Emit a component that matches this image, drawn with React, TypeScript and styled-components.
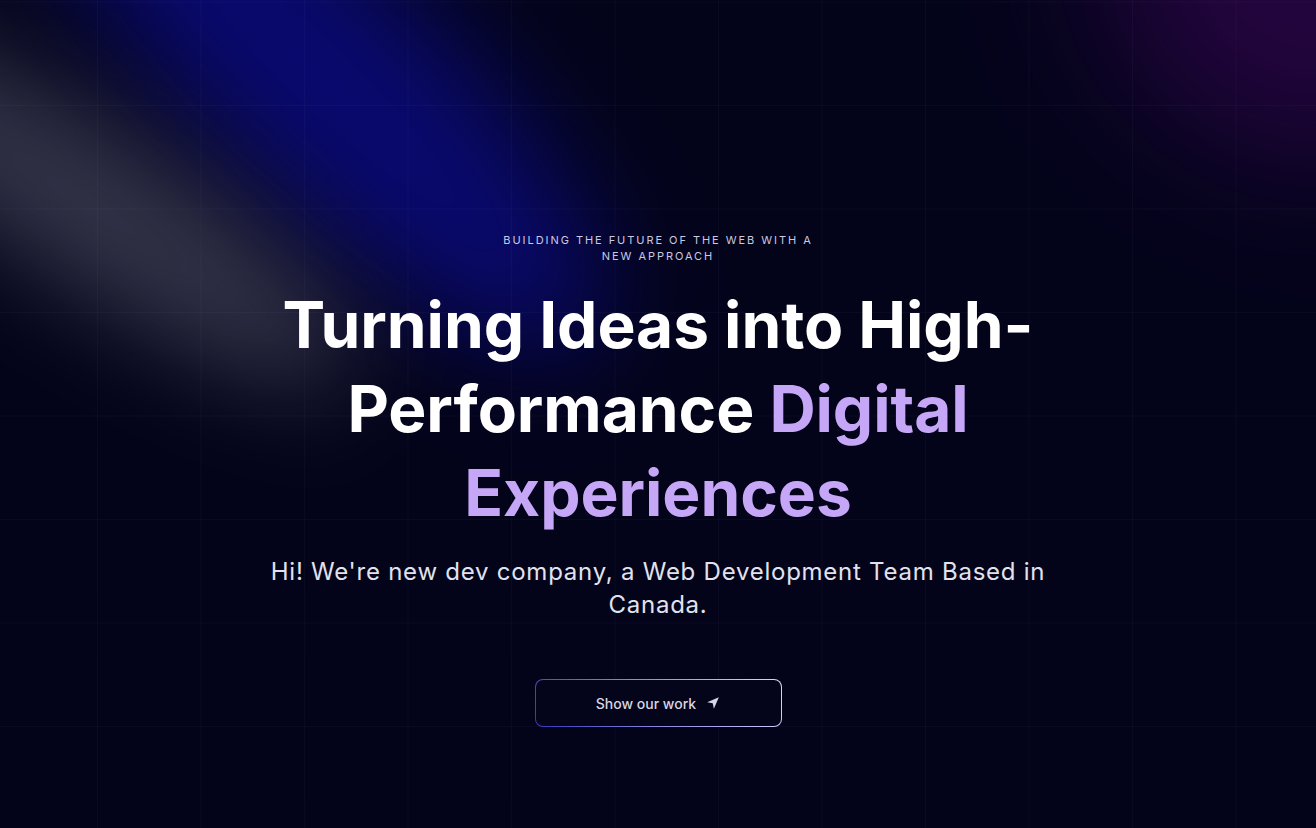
import React from "react";
import styled, { createGlobalStyle } from "styled-components";

const GlobalStyle = createGlobalStyle`
  html, body {
    margin: 0;
    padding: 0;
    background: #03031a;
  }
  * {
    box-sizing: border-box;
  }
`;

type IGlow = {
  top: number;
  left: number;
  w: number;
  h: number;
  angle: number;
  blur: number;
  color: string;
};

const Hero = styled.section`
  position: relative;
  min-height: 828px;
  overflow: hidden;
  background-color: #03031a;
  font-family: Inter, "Noto Sans", sans-serif;
  display: flex;
  flex-direction: column;
  align-items: center;
  padding-top: 232px;
  &::before {
    content: "";
    position: absolute;
    inset: 0;
    background-image: linear-gradient(to right, rgba(150, 150, 220, 0.045) 1px, transparent 1px),
      linear-gradient(to bottom, rgba(150, 150, 220, 0.045) 1px, transparent 1px);
    background-size: 103.5px 103.5px;
    background-position: -6.5px 1.5px;
    z-index: 2;
    pointer-events: none;
  }
`;

const Glow = styled.div<IGlow>`
  position: absolute;
  top: ${p => p.top}px;
  left: ${p => p.left}px;
  width: ${p => p.w}px;
  height: ${p => p.h}px;
  transform: rotate(${p => p.angle}deg);
  transform-origin: center;
  filter: blur(${p => p.blur}px);
  background: ${p => p.color};
  border-radius: 50%;
  z-index: 1;
  pointer-events: none;
`;

const Content = styled.div`
  position: relative;
  z-index: 3;
  display: flex;
  flex-direction: column;
  align-items: center;
  text-align: center;
`;

const Eyebrow = styled.p`
  margin: 0;
  max-width: 322px;
  font-size: 11px;
  line-height: 16px;
  letter-spacing: 1.95px;
  text-transform: uppercase;
  color: #c9c9e2;
`;

const Title = styled.h1`
  margin: 19px 0 0;
  max-width: 780px;
  font-size: 64px;
  line-height: 84px;
  font-weight: 700;
  letter-spacing: -0.05px;
  color: #ffffff;
`;

const Accent = styled.span`
  color: #c6a7f7;
`;

const Lead = styled.p`
  margin: 20px 0 0;
  max-width: 800px;
  font-size: 24px;
  line-height: 33px;
  letter-spacing: 0.75px;
  font-weight: 400;
  color: #e2e2ee;
`;

const Button = styled.button`
  margin-top: 58px;
  width: 247px;
  height: 48px;
  display: flex;
  align-items: center;
  justify-content: center;
  gap: 10px;
  border: 1px solid transparent;
  border-radius: 8px;
  background: linear-gradient(#04041a, #04041a) padding-box,
    linear-gradient(60deg, #3a36b8 0%, #8c86e0 45%, #ddd6ff 100%) border-box;
  font-family: Inter, "Noto Sans", sans-serif;
  font-size: 14px;
  font-weight: 500;
  color: #d6d6e4;
  cursor: pointer;
  svg {
    width: 14px;
    height: 14px;
  }
`;

export default function App() {
  return (
    <>
      <GlobalStyle />
      <Hero>
        {/* light beams */}
        <Glow top={-40} left={-60} w={760} h={230} angle={44} blur={55} color="rgba(10, 10, 115, 0.95)" />
        <Glow top={130} left={-220} w={620} h={150} angle={33} blur={50} color="rgba(72, 72, 92, 0.72)" />
        <Glow top={-170} left={1090} w={400} h={320} angle={30} blur={70} color="rgba(42, 5, 70, 0.8)" />
        <Content>
          <Eyebrow>Building the future of the web with a new approach</Eyebrow>
          <Title>
            Turning Ideas into High-Performance <Accent>Digital Experiences</Accent>
          </Title>
          <Lead>Hi! We're new dev company, a Web Development Team Based in Canada.</Lead>
          <Button>
            Show our work
            <svg viewBox="0 0 24 24" fill="currentColor">
              <polygon points="2 10.5 22 2 13.5 22 11.5 12.5 2 10.5" />
            </svg>
          </Button>
        </Content>
      </Hero>
    </>
  );
}
